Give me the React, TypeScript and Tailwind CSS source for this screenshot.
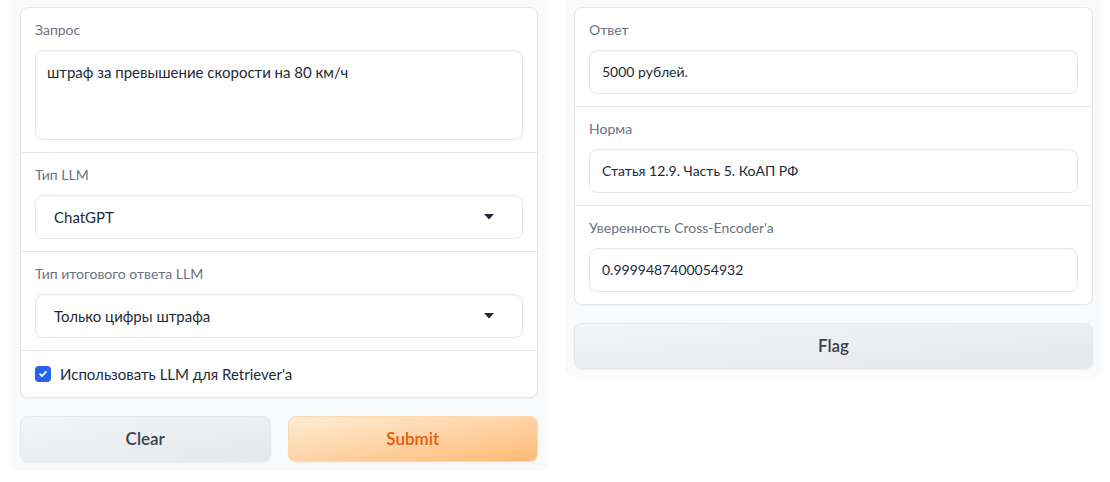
import React from "react";

const font = { fontFamily: '"Lato", "Noto Sans", sans-serif' };

function Label({ children }: { children: React.ReactNode }) {
  return <div className="text-sm leading-5 text-[#6b7280] mb-[10px]">{children}</div>;
}

function Field({ children }: { children: React.ReactNode }) {
  return (
    <div className="h-[44px] flex items-center px-[12px] rounded-lg border border-[#e5e7eb] bg-white shadow-[inset_0_1px_2px_rgba(0,0,0,0.04)] text-sm text-[#1f2937]">
      {children}
    </div>
  );
}

function Select({ value }: { value: string }) {
  return (
    <div className="h-[44px] flex items-center justify-between pl-[18px] pr-[28px] rounded-lg border border-[#e5e7eb] bg-white shadow-[inset_0_1px_2px_rgba(0,0,0,0.04)] text-[15px] text-[#1f2937]">
      <span>{value}</span>
      <svg width="10" height="6" viewBox="0 0 10 6">
        <path d="M0 0h10L5 5.5z" fill="#1f2937" />
      </svg>
    </div>
  );
}

function Block({ children, last }: { children: React.ReactNode; last?: boolean }) {
  return (
    <div className={`px-[14px] pt-[12px] pb-[12px] ${last ? "" : "border-b border-[#e5e7eb]"}`}>
      {children}
    </div>
  );
}

export default function App() {
  return (
    <div className="bg-white min-h-screen flex items-start gap-[17px] pl-[10px]" style={font}>
      <div className="w-[538px] bg-[#f9fafb] rounded-b-lg px-[10px] pt-[7px] pb-[9px]">
        <div className="bg-white border border-[#e5e7eb] rounded-lg shadow-[0_1px_2px_rgba(0,0,0,0.04)]">
          <Block>
            <Label>Запрос</Label>
            <div className="h-[90px] rounded-lg border border-[#e5e7eb] shadow-[inset_0_1px_2px_rgba(0,0,0,0.04)] px-[11px] pt-[11px] text-[15px] leading-5 text-[#1f2937]">
              штраф за превышение скорости на 80 км/ч
            </div>
          </Block>
          <Block>
            <Label>Тип LLM</Label>
            <Select value="ChatGPT" />
          </Block>
          <Block>
            <Label>Тип итогового ответа LLM</Label>
            <Select value="Только цифры штрафа" />
          </Block>
          <div className="h-[46px] flex items-center px-[14px] gap-[9px]">
            <div className="w-4 h-4 rounded bg-[#2563eb] flex items-center justify-center">
              <svg width="10" height="10" viewBox="0 0 12 12">
                <path d="M2.5 6.2l2.3 2.3 4.7-5" fill="none" stroke="white" strokeWidth="2" strokeLinecap="round" strokeLinejoin="round" />
              </svg>
            </div>
            <span className="text-[15px] text-[#1f2937]">Использовать LLM для Retriever'a</span>
          </div>
        </div>
        <div className="flex gap-[17px] mt-[18px]">
          <button className="flex-1 h-[46px] rounded-lg border border-[#e5e7eb] bg-gradient-to-br from-[#f3f4f6] to-[#e5e7eb] text-[17px] font-semibold text-[#374151] shadow-[0_1px_2px_rgba(0,0,0,0.05)]">
            Clear
          </button>
          <button className="flex-1 h-[46px] rounded-lg border border-[#fed7aa] bg-gradient-to-br from-[#ffedd5] to-[#fdba74] text-[17px] font-semibold text-[#ea580c] shadow-[0_1px_2px_rgba(0,0,0,0.05)]">
            Submit
          </button>
        </div>
      </div>
      <div className="w-[537px] bg-[#f9fafb] rounded-b-lg px-[9px] pt-[7px] pb-[8px]">
        <div className="bg-white border border-[#e5e7eb] rounded-lg shadow-[0_1px_2px_rgba(0,0,0,0.04)]">
          <Block>
            <Label>Ответ</Label>
            <Field>5000 рублей.</Field>
          </Block>
          <Block>
            <Label>Норма</Label>
            <Field>Статья 12.9. Часть 5. КоАП РФ</Field>
          </Block>
          <Block last>
            <Label>Уверенность Cross-Encoder'a</Label>
            <Field>0.9999487400054932</Field>
          </Block>
        </div>
        <button className="w-full mt-[18px] h-[46px] rounded-lg border border-[#e5e7eb] bg-gradient-to-br from-[#f3f4f6] to-[#e5e7eb] text-[17px] font-semibold text-[#374151] shadow-[0_1px_2px_rgba(0,0,0,0.05)]">
          Flag
        </button>
      </div>
    </div>
  );
}
